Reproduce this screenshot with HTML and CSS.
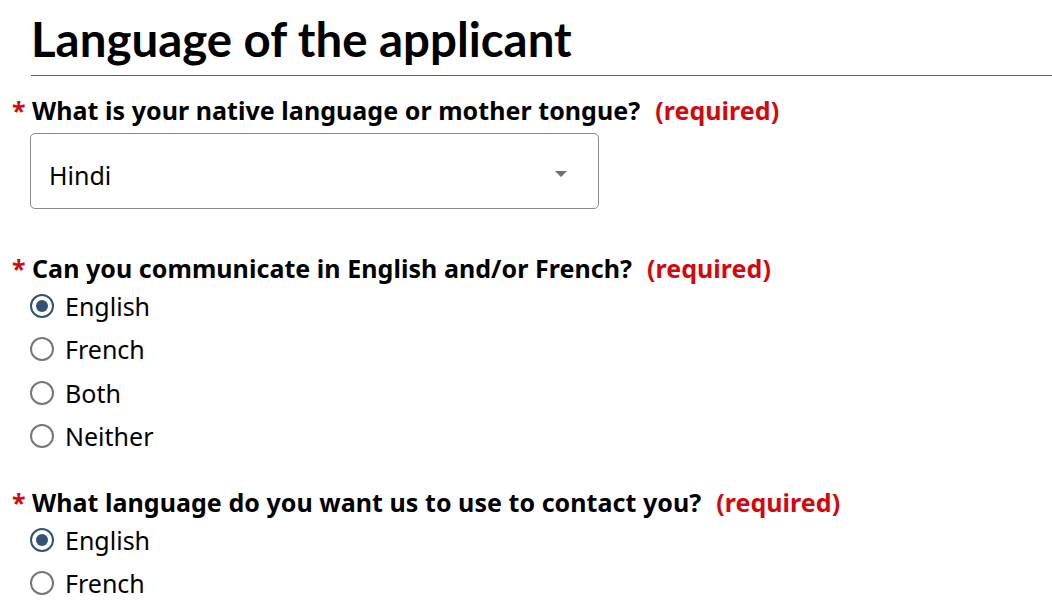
FILE: index.html
```html
<!DOCTYPE html>
<html lang="en">
<head>
<meta charset="utf-8">
<title>Language of the applicant</title>
<link rel="stylesheet" href="styles.css">
</head>
<body>
<main class="page">
  <h1 class="title">Language of the applicant</h1>

  <section class="field field-first">
    <div class="label"><span class="star">*</span><span class="q">What is your native language or mother tongue?</span><span class="req">(required)</span></div>
    <div class="select">
      <span class="select-value">Hindi</span>
      <svg class="caret" width="12" height="6" viewBox="0 0 12 6"><path d="M0 0H12L6 6Z" fill="#6f6f6f"/></svg>
    </div>
  </section>

  <section class="field field-second">
    <div class="label"><span class="star">*</span><span class="q">Can you communicate in English and/or French?</span><span class="req">(required)</span></div>
    <div class="options">
      <label class="opt"><span class="radio checked"></span>English</label>
      <label class="opt"><span class="radio"></span>French</label>
      <label class="opt"><span class="radio"></span>Both</label>
      <label class="opt"><span class="radio"></span>Neither</label>
    </div>
  </section>

  <section class="field field-third">
    <div class="label"><span class="star">*</span><span class="q">What language do you want us to use to contact you?</span><span class="req">(required)</span></div>
    <div class="options">
      <label class="opt"><span class="radio checked"></span>English</label>
      <label class="opt"><span class="radio"></span>French</label>
    </div>
  </section>
</main>
</body>
</html>
```

FILE: styles.css
```css
html, body {
  margin: 0;
  padding: 0;
  background: #fff;
}
body {
  font-family: "Noto Sans", sans-serif;
  color: #000;
}
.page {
  padding: 11px 0 0 12px;
}
.title {
  font-family: Lato, sans-serif;
  font-weight: 700;
  font-size: 47.4px;
  line-height: 56px;
  margin: 0 0 0 19px;
  padding-bottom: 8px;
  border-bottom: 1px solid #af3c43;
}
.field-first {
  margin-top: 18px;
}
.field-second {
  margin-top: 43px;
}
.field-third {
  margin-top: 28px;
}
.label {
  display: flex;
  align-items: baseline;
  font-size: 25px;
  font-weight: 700;
  line-height: 32px;
  letter-spacing: 0.05px;
}
.star {
  color: #d3080c;
  width: 20px;
}
.req {
  color: #d3080c;
  margin-left: 15px;
}
.select {
  margin: 7px 0 0 18px;
  width: 569px;
  height: 76px;
  border: 1px solid #8a8a8a;
  border-radius: 5px;
  display: flex;
  align-items: center;
  justify-content: space-between;
  padding: 0 31px 0 18px;
  box-sizing: border-box;
  font-size: 25px;
}
.select-value {
  padding-top: 8px;
}
.caret {
  margin-top: 5px;
}
.options {
  display: flex;
  flex-direction: column;
  margin-left: 18px;
}
.opt {
  display: flex;
  align-items: center;
  height: 43.5px;
  font-size: 25px;
}
.radio {
  width: 24px;
  height: 24px;
  border: 2px solid #777;
  border-radius: 50%;
  box-sizing: border-box;
  margin-right: 11px;
  flex: none;
  position: relative;
}
.radio.checked {
  border: 2px solid #335075;
}
.radio.checked::after {
  content: "";
  position: absolute;
  left: 4px;
  top: 4px;
  width: 12px;
  height: 12px;
  border-radius: 50%;
  background: #335075;
}
```
